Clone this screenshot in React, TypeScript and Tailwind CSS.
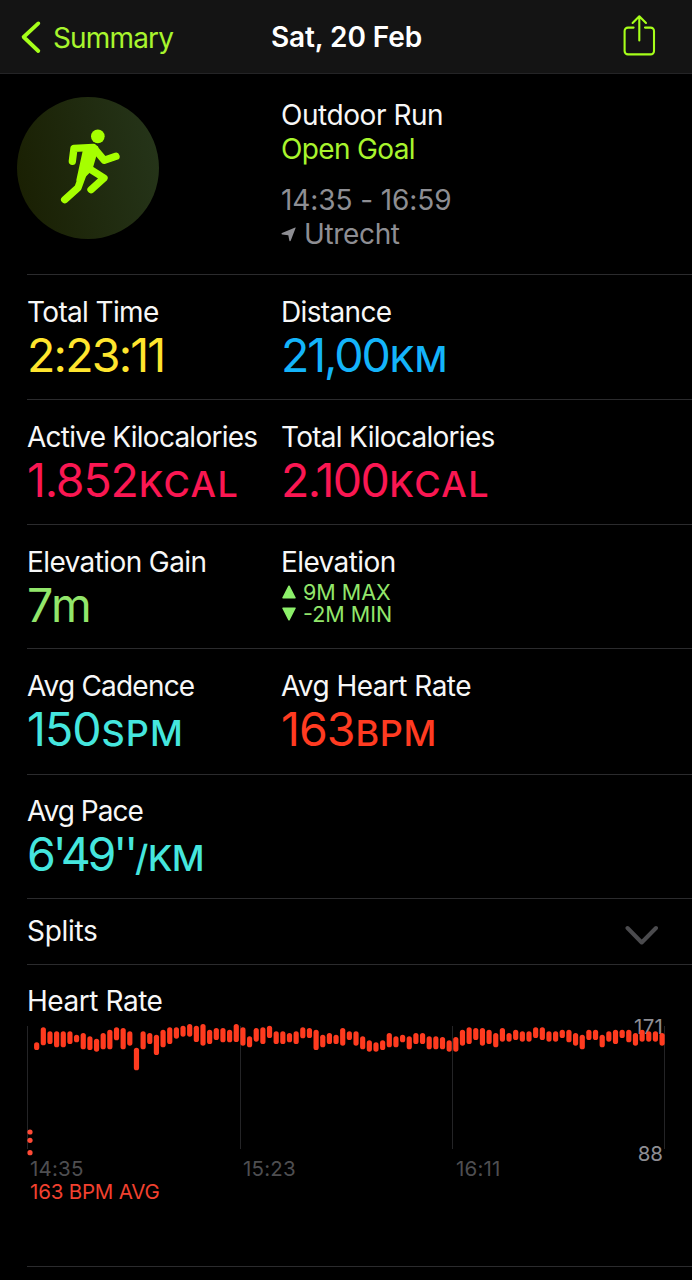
import React from "react";

type MetricProps = {
  label: string;
  labelClass?: string;
  value?: string;
  valueClass?: string;
  unit?: string;
  unitClass?: string;
  color?: string;
  children?: React.ReactNode;
};

function Metric({ label, labelClass = "", value, valueClass = "", unit, unitClass = "", color = "", children }: MetricProps) {
  return (
    <div className="whitespace-nowrap">
      <div className={`text-[28px] leading-[34px] text-[#f7f7f7] ${labelClass}`}>{label}</div>
      {value && (
        <div className={`mt-px flex items-baseline leading-[50px] ${color}`}>
          <span className={`text-[46.5px] ${valueClass}`}>{value}</span>
          {unit && <span className={`text-[36px] font-medium ${unitClass}`}>{unit}</span>}
        </div>
      )}
      {children}
    </div>
  );
}

function Row({ className, children }: { className: string; children: React.ReactNode }) {
  return (
    <section className={`ml-[27px] grid shrink-0 grid-cols-[254px_1fr] border-t border-[#2b2b2d] ${className}`}>
      {children}
    </section>
  );
}

// Heart rate ranges as [top, bottom], in thirds of a pixel from the chart's top
const ranges: [number, number][] = [
  [97, 120], [52, 106], [64, 102], [64, 112], [64, 112], [64, 102], [74, 97], [69, 118], [79, 120], [86, 125],
  [69, 118], [59, 118], [52, 91], [54, 118], [64, 107], [113, 181], [64, 118], [69, 102], [74, 135], [59, 112],
  [52, 102], [52, 86], [47, 80], [42, 80], [47, 96], [42, 107], [59, 102], [54, 90], [54, 97], [59, 97],
  [42, 96], [52, 107], [79, 112], [54, 95], [52, 102], [47, 84], [64, 102], [64, 102], [69, 97], [64, 102],
  [52, 85], [54, 84], [59, 120], [74, 112], [69, 102], [74, 102], [54, 107], [64, 90], [64, 107], [79, 118],
  [91, 125], [97, 125], [91, 120], [69, 112], [79, 112], [74, 97], [79, 118], [69, 102], [69, 102], [79, 118],
  [79, 118], [81, 118], [91, 125], [81, 125], [59, 107], [52, 102], [54, 90], [54, 107], [59, 102], [69, 112],
  [54, 95], [69, 95], [59, 90], [64, 95], [64, 95], [52, 84], [52, 90], [64, 95], [64, 95], [59, 84],
  [59, 97], [69, 107], [74, 118], [59, 90], [59, 90], [74, 112], [64, 95], [59, 102], [59, 84], [59, 97],
  [69, 107], [59, 95], [64, 95], [64, 95], [69, 107],
];

function HeartRateChart() {
  return (
    <div className="relative h-[148px]">
      <span className="absolute top-[4px] right-[29px] text-[20.5px] leading-[26px] tracking-[0.2px] text-[#8e8e93]">171</span>
      <span className="absolute top-[131px] right-[29px] text-[20.5px] leading-[26px] text-[#8e8e93]">88</span>
      <svg className="relative block" width="665" height="148" viewBox="27 1010 665 148">
        {[27.5, 240.5, 452.5, 664.5].map((x) => (
          <path key={x} d={`M${x} 1026V1149`} stroke="#242426" strokeWidth="1" />
        ))}
        {[1132, 1140.3, 1152.7].map((y) => (
          <circle key={y} cx="30" cy={y} r="2.6" fill="#ff4a36" />
        ))}
        {ranges.map(([top, bottom], i) => (
          <rect
            key={i}
            x={(110 + 19.96 * i) / 3 - 2.6}
            y={1010 + top / 3}
            width="5.2"
            height={(bottom - top) / 3}
            rx="2.6"
            fill="#ff3b1f"
          />
        ))}
      </svg>
    </div>
  );
}

export default function App() {
  return (
    <div className="flex h-[1280px] w-[692px] flex-col overflow-hidden bg-black font-['Inter','Liberation_Sans',sans-serif] text-white">
      <header className="grid h-[74px] shrink-0 grid-cols-[1fr_auto_1fr] items-center border-b border-[#242426] bg-[#141414]">
        <div className="flex items-center text-[#a8f52d]">
          <svg className="ml-[20px]" width="22" height="34" viewBox="20 20 22 34" fill="none" stroke="#a6ff1a" strokeWidth="3.8" strokeLinecap="round" strokeLinejoin="round">
            <path d="M38.3 23.4L23.6 37l14.7 14" />
          </svg>
          <span className="ml-[11px] pt-[2px] text-[28px] tracking-[-0.85px]">Summary</span>
        </div>
        <h1 className="pt-px pl-px text-[28px] font-semibold tracking-[-0.1px]">Sat, 20 Feb</h1>
        <svg className="mr-[36px] mb-[2px] justify-self-end" width="34" height="44" viewBox="622 14 34 44" fill="none" stroke="#a6ff1a" strokeWidth="2.1" strokeLinecap="round" strokeLinejoin="round">
          <path d="M633.6 27.6H628a3.4 3.4 0 0 0-3.4 3.4v20a3.4 3.4 0 0 0 3.4 3.4h22.6a3.4 3.4 0 0 0 3.4-3.4V31a3.4 3.4 0 0 0-3.4-3.4H645" />
          <path d="M639.3 40.5V16.5M632.6 23l6.7-6.700 6.700 6.700" />
        </svg>
      </header>

      <section className="flex h-[200px] shrink-0">
        <svg className="mt-[23px] ml-[17px]" width="142" height="142" viewBox="51 51 426 426">
          <defs>
            <linearGradient id="disc" x1="0" y1="0.6" x2="1" y2="0.4">
              <stop offset="0" stopColor="#1a2003" />
              <stop offset="1" stopColor="#253419" />
            </linearGradient>
          </defs>
          <circle cx="264" cy="264" r="213" fill="url(#disc)" />
          <g fill="#a6ff00" stroke="#a6ff00" strokeLinecap="round" strokeLinejoin="round">
            <circle cx="293.5" cy="169" r="20.5" stroke="none" />
            <path fill="none" strokeWidth="22" d="M217 244L222 205L280 202L313 241L348 229" />
            <path strokeWidth="10" d="M255 204L290 202L285 224L274 262L264 276L240 300L234 300Z" />
            <path fill="none" strokeWidth="22" d="M260 261L312 294L273 329M248 285L234 323L194 359" />
          </g>
        </svg>
        <div className="ml-[122px] pt-[24px] text-[28px] leading-[34px] whitespace-nowrap">
          <div className="tracking-[-0.45px] text-[#f7f7f7]">Outdoor Run</div>
          <div className="tracking-[-0.65px] text-[#a8f52d]">Open Goal</div>
          <div className="mt-[17px] tracking-[-0.1px] text-[#8e8e93]">14:35 - 16:59</div>
          <div className="flex text-[#8e8e93]">
            <svg className="mt-[10px] mr-[8px]" width="15" height="15" viewBox="0 0 15 15" fill="currentColor">
              <path d="M14.2.4Q14.900.300 14.600 1.100L9.800 13.600Q9.100 14.800 8.400 13.700L7.300 8.200L1.200 7.500Q-.200 7 1 6Z" />
            </svg>
            <span className="tracking-[-0.35px]">Utrecht</span>
          </div>
        </div>
      </section>

      <Row className="h-[125px] pt-[20px]">
        <Metric label="Total Time" labelClass="tracking-[-0.65px]" value="2:23:11" valueClass="tracking-[-1.8px]" color="text-[#ffe52e]" />
        <Metric label="Distance" labelClass="tracking-[-0.65px]" value="21,00" valueClass="tracking-[-2.1px]" unit="KM" unitClass="pl-px" color="text-[#14b4fa]" />
      </Row>
      <Row className="h-[125px] pt-[20px]">
        <Metric label="Active Kilocalories" labelClass="tracking-[-0.76px]" value="1.852" valueClass="tracking-[-1.2px]" unit="KCAL" unitClass="pl-px tracking-[1.4px]" color="text-[#fa1752]" />
        <Metric label="Total Kilocalories" labelClass="tracking-[-0.71px]" value="2.100" valueClass="tracking-[-1.6px]" unit="KCAL" unitClass="pl-px tracking-[1.4px]" color="text-[#fa1752]" />
      </Row>
      <Row className="h-[124px] pt-[20px]">
        <Metric label="Elevation Gain" labelClass="tracking-[-0.6px]" value="7m" color="text-[#92e66b]" />
        <Metric label="Elevation" labelClass="tracking-[-0.6px]">
          <div className="pt-[2px] text-[21.5px] leading-[22px] text-[#92e66b]">
            <div className="flex">
              <svg className="mt-[4px] mr-[7px] ml-px" width="14" height="14" viewBox="0 0 14 14" fill="#8cf06a" stroke="#8cf06a" strokeWidth="1.5" strokeLinejoin="round"><path d="M7 1.2L13 12.8H1Z" /></svg>
              9M MAX
            </div>
            <div className="flex">
              <svg className="mt-[4px] mr-[7px] ml-px" width="14" height="14" viewBox="0 0 14 14" fill="#8cf06a" stroke="#8cf06a" strokeWidth="1.5" strokeLinejoin="round"><path d="M7 12.8L13 1.2H1Z" /></svg>
              -2M MIN
            </div>
          </div>
        </Metric>
      </Row>
      <Row className="h-[126px] pt-[20px]">
        <Metric label="Avg Cadence" labelClass="tracking-[-0.8px]" value="150" valueClass="tracking-[-1px]" unit="SPM" unitClass="pl-px tracking-[1px]" color="text-[#45e6de]" />
        <Metric label="Avg Heart Rate" labelClass="tracking-[-0.55px]" value="163" valueClass="tracking-[-1px]" unit="BPM" unitClass="pl-px tracking-[0.6px]" color="text-[#ff3b21]" />
      </Row>
      <Row className="h-[124px] pt-[19px]">
        <Metric label="Avg Pace" labelClass="tracking-[-0.95px]" value="6'49''" valueClass="tracking-[-3.1px]" unit="/KM" unitClass="tracking-[-0.7px]" color="text-[#45e6de]" />
      </Row>

      <section className="ml-[27px] flex h-[66px] shrink-0 items-center justify-between border-t border-[#2b2b2d] pr-[34px]">
        <span className="pb-[2px] text-[28px] tracking-[-0.3px] text-[#f7f7f7]">Splits</span>
        <svg className="mt-[8px]" width="34" height="21" viewBox="624 925 34 21" fill="none" stroke="#4b4b4e" strokeWidth="4" strokeLinecap="round" strokeLinejoin="round">
          <path d="M627.5 928L641.7 942.5L656 928" />
        </svg>
      </section>

      <section className="ml-[27px] h-[302px] shrink-0 border-t border-[#2b2b2d] pt-[19px]">
        <h2 className="text-[28px] leading-[34px] tracking-[-0.45px] text-[#f7f7f7]">Heart Rate</h2>
        <div className="-mt-[8px]">
          <HeartRateChart />
        </div>
        <div className="grid grid-cols-[213px_212px_1fr] pl-[3px] text-[20.5px] leading-[22px] tracking-[0.2px] text-[#4e4e51]">
          <span>14:35</span>
          <span>15:23</span>
          <span className="pl-px">16:11</span>
        </div>
        <div className="pl-[3px] text-[20.5px] leading-[24px] tracking-[-0.2px] text-[#f2412f]">163 BPM AVG</div>
      </section>
      <div className="ml-[27px] border-t border-[#2b2b2d]" />
    </div>
  );
}
